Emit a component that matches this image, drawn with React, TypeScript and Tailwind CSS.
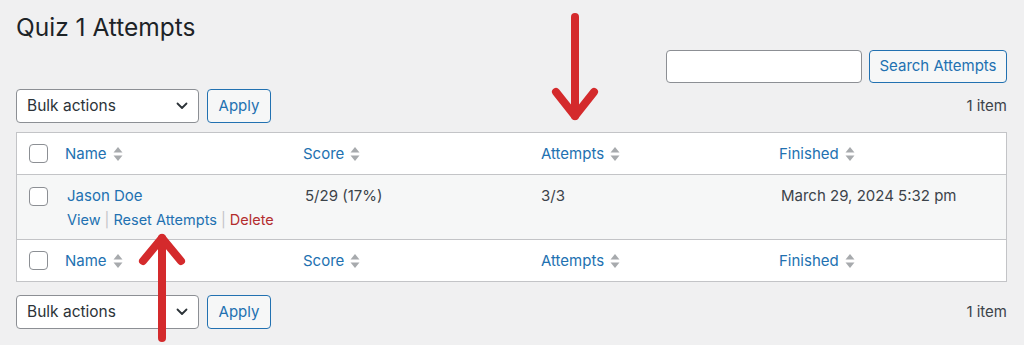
import React from "react";

const font = { fontFamily: "Inter, 'Noto Sans', sans-serif" };

function SortIcon() {
  return (
    <svg width="10" height="16" viewBox="0 0 10 16" className="ml-[6px] shrink-0">
      <path d="M5 1 L9.5 6.5 L0.5 6.5 Z" fill="#a7aaad" />
      <path d="M5 15 L9.5 9.5 L0.5 9.5 Z" fill="#a7aaad" />
    </svg>
  );
}

function Checkbox() {
  return <div className="w-[19px] h-[19px] rounded-[4px] border border-[#8c8f94] bg-white" />;
}

function HeaderRow({ top }: { top: boolean }) {
  const cols = ["Name", "Score", "Attempts", "Finished"];
  return (
    <div
      className={
        "grid grid-cols-[48px_238px_238px_238px_1fr] items-center h-[42px] bg-white " +
        (top ? "border-b border-[#c3c4c7]" : "border-t border-[#c3c4c7]")
      }
    >
      <div className="pl-[12px] flex items-center">
        <Checkbox />
      </div>
      {cols.map((c) => (
        <div key={c} className="flex items-center text-[15px] text-[#2271b1] pt-[1px]">
          <span>{c}</span>
          <SortIcon />
        </div>
      ))}
    </div>
  );
}

function TableNav() {
  return (
    <div className="flex items-center justify-between h-[34px]">
      <div className="flex items-center gap-[8px]">
        <div className="w-[183px] h-[34px] rounded-[4px] border border-[#8c8f94] bg-white flex items-center justify-between pl-[10px] pr-[10px]">
          <span className="text-[15.5px] text-[#2c3338]">Bulk actions</span>
          <svg width="12" height="8" viewBox="0 0 12 8">
            <path d="M1.5 1.5 L6 6 L10.5 1.5" stroke="#2c3338" strokeWidth="1.8" fill="none" strokeLinecap="round" strokeLinejoin="round" />
          </svg>
        </div>
        <div className="w-[64px] h-[34px] rounded-[4px] border border-[#2271b1] bg-[#f6f7f7] flex items-center justify-center text-[15px] text-[#2271b1]">
          Apply
        </div>
      </div>
      <span className="text-[15px] text-[#3c434a]">1 item</span>
    </div>
  );
}

export default function App() {
  return (
    <div className="relative w-[1024px] h-[345px] bg-[#f0f0f1] overflow-hidden" style={font}>
      <div className="pl-[16px] pr-[17px]">
        <h1 className="pt-[12px] h-[46px] text-[24.5px] leading-[30px] text-[#1d2327] font-normal">Quiz 1 Attempts</h1>
        <div className="flex justify-end gap-[7px] mt-[4px]">
          <div className="w-[196px] h-[33px] rounded-[4px] border border-[#8c8f94] bg-white" />
          <div className="w-[138px] h-[33px] rounded-[4px] border border-[#2271b1] bg-[#f6f7f7] flex items-center justify-center text-[15px] text-[#2271b1]">
            Search Attempts
          </div>
        </div>
        <div className="mt-[6px]">
          <TableNav />
        </div>
        <div className="mt-[9px] border border-[#c3c4c7] bg-white">
          <HeaderRow top={true} />
          <div className="grid grid-cols-[48px_238px_238px_238px_1fr] h-[64px] bg-[#f6f7f7] text-[15px] text-[#3c434a]">
            <div className="pl-[12px] pt-[12px]">
              <Checkbox />
            </div>
            <div className="pt-[9px] pl-[2px]">
              <div className="text-[#2271b1] leading-[24px]">Jason Doe</div>
              <div className="leading-[24px] text-[14.5px]">
                <span className="text-[#2271b1]">View</span>
                <span className="text-[#c3c4c7] mx-[4px]">|</span>
                <span className="text-[#2271b1]">Reset Attempts</span>
                <span className="text-[#c3c4c7] mx-[4px]">|</span>
                <span className="text-[#b32d2e]">Delete</span>
              </div>
            </div>
            <div className="pt-[9px] pl-[2px] leading-[24px]">5/29 (17%)</div>
            <div className="pt-[9px] leading-[24px]">3/3</div>
            <div className="pt-[9px] pl-[2px] leading-[24px]">March 29, 2024 5:32 pm</div>
          </div>
          <HeaderRow top={false} />
        </div>
        <div className="mt-[13px]">
          <TableNav />
        </div>
      </div>
      <svg className="absolute inset-0 pointer-events-none" width="1024" height="345" viewBox="0 0 1024 345">
        <g stroke="#d42a2c" strokeWidth="8" strokeLinecap="round" strokeLinejoin="round" fill="none">
          <path d="M575 17 L575 116" />
          <path d="M556 92 L575 116 L594 92" />
          <path d="M162 338 L162 238" />
          <path d="M143 261 L162 238 L181 261" />
        </g>
      </svg>
    </div>
  );
}
